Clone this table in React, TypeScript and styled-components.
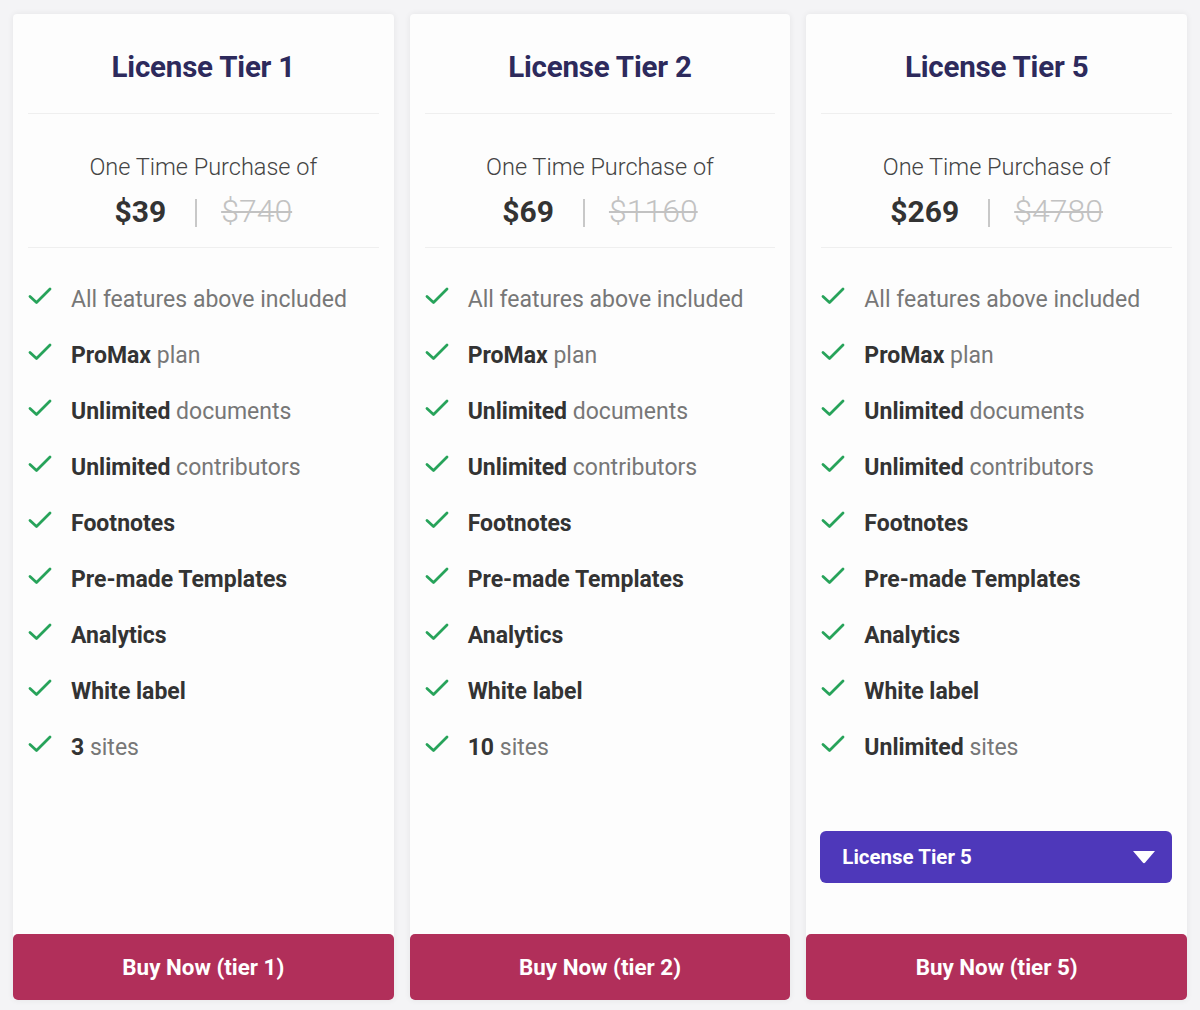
import React from "react";
import styled, { createGlobalStyle } from "styled-components";

const GlobalStyle = createGlobalStyle`
  html, body { margin: 0; padding: 0; background: #f4f4f6; }
  body { font-family: Roboto, "Liberation Sans", sans-serif; }
  * { box-sizing: border-box; }
`;

const Page = styled.div`
  display: grid;
  grid-template-columns: repeat(3, 1fr);
  column-gap: 16px;
  padding: 14px 13px 10px;
  height: 1010px;
`;

const Card = styled.div`
  display: flex;
  flex-direction: column;
  background: #fdfdfd;
  border-radius: 4px;
  box-shadow: 0 0 6px rgba(0, 0, 0, 0.07);
`;

const Header = styled.div`
  padding: 37px 15px 0;
`;

const Title = styled.h2`
  margin: 0 0 30px;
  font-family: Roboto, sans-serif;
  font-size: 29.5px;
  line-height: 32px;
  font-weight: 700;
  color: #2d2a5c;
  text-align: center;
  letter-spacing: -0.2px;
`;

const Divider = styled.div`
  height: 1px;
  background: #efefef;
  margin: 0 15px;
`;

const PriceBlock = styled.div`
  padding: 38px 15px 18px;
  text-align: center;
`;

const Lead = styled.div`
  font-size: 23.5px;
  line-height: 30px;
  font-weight: 300;
  color: #444;
`;

const PriceRow = styled.div`
  margin-top: 11px;
  display: flex;
  justify-content: center;
  align-items: center;
  height: 36px;
`;

const Price = styled.span`
  font-size: 30px;
  font-weight: 700;
  color: #333;
`;

const Sep = styled.span`
  display: inline-block;
  width: 2px;
  height: 28px;
  background: #c8c8c8;
  margin: 4px 24px 0 29px;
`;

const OldPrice = styled.span`
  font-size: 32px;
  font-weight: 300;
  color: #c2c2c2;
  text-decoration: line-through;
  text-decoration-thickness: 2px;
`;

const Features = styled.ul`
  list-style: none;
  margin: 0;
  padding: 23px 15px 0;
`;

const Feature = styled.li`
  display: flex;
  align-items: center;
  height: 56px;
  font-size: 23px;
  color: #777;
`;

const Check = styled.svg`
  width: 24px;
  height: 20px;
  margin: -6px 19px 0 0;
  flex: none;
`;

const Strong = styled.b`
  color: #333;
  font-weight: 700;
`;

const Select = styled.div`
  margin: 56px 15px 0 14px;
  height: 52px;
  border-radius: 6px;
  background: #4e38ba;
  color: #fff;
  display: flex;
  align-items: center;
  justify-content: space-between;
  padding: 0 16px 0 22px;
  font-size: 20.5px;
  font-weight: 700;
`;

const Triangle = styled.svg`
  width: 24px;
  height: 14px;
`;

const BuyButton = styled.button`
  margin-top: auto;
  height: 66px;
  border: none;
  border-radius: 5px;
  background: #b12f5a;
  color: #fff;
  font-family: Roboto, sans-serif;
  font-size: 22.4px;
  font-weight: 700;
  cursor: pointer;
`;

type FeatureItem = { bold?: string; rest?: string };

const common: FeatureItem[] = [
  { rest: "All features above included" },
  { bold: "ProMax", rest: " plan" },
  { bold: "Unlimited", rest: " documents" },
  { bold: "Unlimited", rest: " contributors" },
  { bold: "Footnotes" },
  { bold: "Pre-made Templates" },
  { bold: "Analytics" },
  { bold: "White label" },
];

const tiers = [
  { n: 1, price: "$39", old: "$740", sites: "3" },
  { n: 2, price: "$69", old: "$1160", sites: "10" },
  { n: 5, price: "$269", old: "$4780", sites: "Unlimited", select: true },
];

const CheckIcon = () => (
  <Check viewBox="0 0 24 20">
    <path d="M2 10.5 L8.5 16.5 L22 3" fill="none" stroke="#27a35a" strokeWidth="2.8" strokeLinecap="round" strokeLinejoin="round" />
  </Check>
);

export default function App() {
  return (
    <>
      <GlobalStyle />
      <Page>
        {tiers.map((t) => {
          const items: FeatureItem[] = [...common, { bold: t.sites, rest: " sites" }];
          return (
            <Card key={t.n}>
              <Header>
                <Title>License Tier {t.n}</Title>
              </Header>
              <Divider />
              <PriceBlock>
                <Lead>One Time Purchase of</Lead>
                <PriceRow>
                  <Price>{t.price}</Price>
                  <Sep />
                  <OldPrice>{t.old}</OldPrice>
                </PriceRow>
              </PriceBlock>
              <Divider />
              <Features>
                {items.map((f, i) => (
                  <Feature key={i}>
                    <CheckIcon />
                    <span>
                      {f.bold && <Strong>{f.bold}</Strong>}
                      {f.rest}
                    </span>
                  </Feature>
                ))}
              </Features>
              {t.select && (
                <Select>
                  <span>License Tier {t.n}</span>
                  <Triangle viewBox="0 0 24 14">
                    <path d="M1 1 H23 L13.2 12.6 Q12 14 10.8 12.6 Z" fill="#fff" />
                  </Triangle>
                </Select>
              )}
              <BuyButton>Buy Now (tier {t.n})</BuyButton>
            </Card>
          );
        })}
      </Page>
    </>
  );
}
